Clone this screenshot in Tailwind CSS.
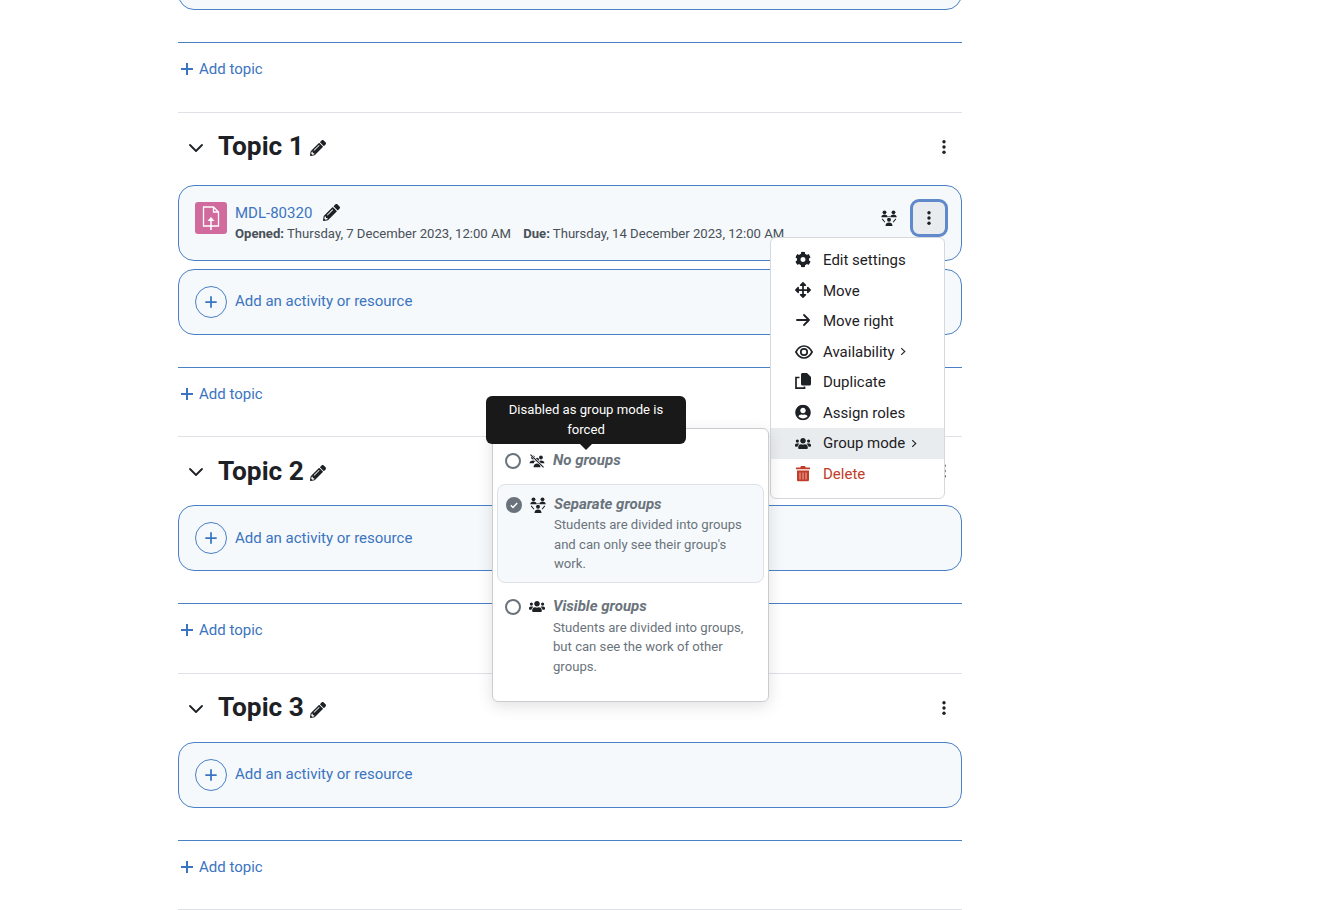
<!DOCTYPE html>
<html>
<head>
<meta charset="utf-8">
<script src="https://cdn.jsdelivr.net/npm/@tailwindcss/browser@4"></script>
</head>
<body class="bg-white">
<svg class="hidden" aria-hidden="true">
  <symbol id="pen" viewBox="0 0 512 512"><path fill="currentColor" d="M497.9 142.1l-46.1 46.1c-4.7 4.7-12.3 4.7-17 0l-111-111c-4.7-4.7-4.7-12.3 0-17l46.1-46.1c18.7-18.7 49.1-18.7 67.9 0l60.1 60.1c18.8 18.7 18.8 49.1 0 67.9zM284.2 99.8L21.6 362.4.4 483.9c-2.9 16.4 11.4 30.6 27.8 27.8l121.5-21.3 262.6-262.6c4.7-4.7 4.7-12.3 0-17l-111-111c-4.8-4.7-12.4-4.7-17.1 0zM124.1 339.9c-5.5-5.5-5.5-14.3 0-19.8l154-154c5.5-5.5 14.3-5.5 19.8 0s5.5 14.3 0 19.8l-154 154c-5.5 5.5-14.3 5.5-19.8 0zM88 424h48v36.3l-64.5 11.3-31.1-31.1L51.7 376H88v48z"/></symbol>
  <symbol id="chev" viewBox="0 0 16 16"><path fill="none" stroke="currentColor" stroke-width="1.800" stroke-linecap="round" stroke-linejoin="round" d="M2 5l6 6 6-6"/></symbol>
  <symbol id="kebab" viewBox="0 0 16 16"><circle cx="8" cy="2.800" r="1.700" fill="currentColor"/><circle cx="8" cy="8" r="1.700" fill="currentColor"/><circle cx="8" cy="13.200" r="1.700" fill="currentColor"/></symbol>
  <symbol id="plus" viewBox="0 0 16 16"><path fill="none" stroke="currentColor" stroke-width="2" d="M8 1.500v13M1.500 8h13"/></symbol>
  <symbol id="plusb" viewBox="0 0 12 12"><path fill="none" stroke="currentColor" stroke-width="2" d="M6 0v12M0 6h12"/></symbol>
  <symbol id="users" viewBox="0 0 640 512"><path fill="currentColor" d="M96 224c35.300 0 64-28.700 64-64s-28.700-64-64-64-64 28.700-64 64 28.700 64 64 64zm448 0c35.300 0 64-28.700 64-64s-28.700-64-64-64-64 28.700-64 64 28.700 64 64 64zm32 32h-64c-17.600 0-33.500 7.100-45.100 18.600 40.300 22.100 68.900 62 75.100 109.400h66c17.700 0 32-14.300 32-32v-32c0-35.300-28.700-64-64-64zm-256 0c61.900 0 112-50.100 112-112S381.900 32 320 32 208 82.100 208 144s50.100 112 112 112zm76.800 32h-8.300c-20.800 10-43.900 16-68.500 16s-47.600-6-68.500-16h-8.300C179.600 288 128 339.600 128 403.200V432c0 26.500 21.500 48 48 48h288c26.500 0 48-21.500 48-48v-28.800c0-63.600-51.600-115.200-115.200-115.200zm-223.700-13.400C161.500 263.100 145.600 256 128 256H64c-35.300 0-64 28.700-64 64v32c0 17.700 14.300 32 32 32h65.900c6.300-47.400 34.900-87.300 75.200-109.400z"/></symbol>
  <symbol id="sep" viewBox="0 0 16 16"><g fill="currentColor"><circle cx="3.500" cy="2.300" r="1.900"/><path d="M.3 7.300C.3 5.300 1.700 4.500 3.500 4.500s3.200.8 3.200 2.800z"/><circle cx="12.500" cy="2.300" r="1.900"/><path d="M9.300 7.300c0-2 1.400-2.800 3.200-2.800s3.200.8 3.200 2.800z"/><circle cx="8" cy="9.700" r="2"/><path d="M4.500 16c0-2.300 1.500-3.400 3.500-3.400s3.500 1.100 3.500 3.400z"/><path d="M1.600 8.600l2.700 3.300-.8.600L.8 9.200zM14.400 8.600l-2.700 3.300.8.600 2.700-3.300zM6 7h4L8 6.200z"/></g></symbol>
  <symbol id="nog" viewBox="0 0 18 16"><g fill="currentColor"><circle cx="4.500" cy="4" r="2.200"/><circle cx="13.500" cy="4" r="2.200"/><circle cx="9" cy="6.500" r="2.300"/><path d="M.5 10.500c0-2 1.700-3.200 4-3.200 1 0 1.800.2 2.400.6-.8.700-1.400 1.600-1.500 2.600z"/><path d="M17.500 10.500c0-2-1.700-3.200-4-3.200-1 0-1.800.2-2.400.6.800.7 1.400 1.600 1.500 2.600z"/><path d="M5 15c0-2.600 1.700-4.200 4-4.200s4 1.600 4 4.200z"/></g><path d="M1.500.5l15 14.500" stroke="white" stroke-width="2.400"/><path d="M1.500.8l15 14.500" stroke="currentColor" stroke-width="1.300"/></symbol>
</svg>

<div class="relative h-[910px] overflow-hidden text-[15px] leading-[22px] text-[#1d2125]" style="font-family:Roboto,'Liberation Sans',sans-serif">
  <div class="ml-[178px] w-[784px]">
    <div class="-mt-[56px] h-[66px] rounded-[16px] border border-[#4a80c6] bg-[#f5f9fc]"></div>
    <div class="mt-[32px] h-[70px] border-t border-[#4a80c6]">
      <a class="flex h-[51px] items-center gap-[6px] pl-[3px] text-[#3b74c0]"><svg class="size-[12px]"><use href="#plusb"/></svg><span class="-translate-y-[0.5px]">Add topic</span></a>
    </div>

    <!-- Topic 1 -->
    <section class="border-t border-[#dee2e6]">
      <div class="flex h-[72px] items-center pb-[6px]">
        <svg class="ml-[10px] size-[16px] translate-y-[2px]"><use href="#chev"/></svg>
        <h3 class="ml-[14px] text-[26.25px] font-bold leading-none">Topic 1</h3>
        <svg class="ml-[6px] mt-[4px] size-[16px]"><use href="#pen"/></svg>
        <svg class="ml-auto mr-[10px] size-[16px] translate-y-[1px]"><use href="#kebab"/></svg>
      </div>
      <div class="flex h-[76px] items-start rounded-[16px] border border-[#4a80c6] bg-[#f5f9fc] pl-[16px] pr-[13px]">
        <div class="mt-[16px] flex size-[32px] items-center justify-center rounded-[3px] bg-[#d16b9d] text-white">
          <svg width="18" height="26" viewBox="0 0 18 26" fill="none" stroke="white" stroke-width="1.300"><path d="M1.500 2h10l5 5v14h-15zM11.500 2v5h5"/><path d="M9 25v-10" stroke-width="1.500"/><path d="M5.500 16L9 12l3.500 4z" fill="white" stroke="none"/></svg>
        </div>
        <div class="ml-[8px] mt-[16px] min-w-0">
          <div class="flex h-[22px] items-center text-[#3b74c0]">MDL-80320<svg class="ml-[11px] size-[17px] -translate-y-[1px] text-[#1d2125]"><use href="#pen"/></svg></div>
          <div class="whitespace-nowrap text-[13.125px] leading-[20px] text-[#495057]"><b class="font-bold">Opened:</b> Thursday, 7 December 2023, 12:00 AM <b class="ml-[9px] font-bold">Due:</b> Thursday, 14 December 2023, 12:00 AM</div>
        </div>
        <svg class="ml-auto mt-[24px] h-[16px] w-[16px]"><use href="#sep"/></svg>
        <div class="ml-[13px] mt-[13px] flex h-[38px] w-[38px] items-center justify-center rounded-[9px] border-[3px] border-[#6089cb] bg-[#e9ecef]"><svg class="size-[16px]"><use href="#kebab"/></svg></div>
      </div>
      <div class="mt-[8px] flex h-[66px] items-center gap-[8px] rounded-[16px] border border-[#4a80c6] bg-[#f5f9fc] pl-[16px] text-[#3b74c0]">
        <span class="flex size-[32px] items-center justify-center rounded-full border border-[#4a80c6]"><svg class="size-[14px]"><use href="#plus"/></svg></span><span class="-translate-y-[1px]">Add an activity or resource</span>
      </div>
      <div class="mt-[32px] h-[69px] border-t border-[#4a80c6]">
        <a class="flex h-[51px] items-center gap-[6px] pl-[3px] text-[#3b74c0]"><svg class="size-[12px]"><use href="#plusb"/></svg>Add topic</a>
      </div>
    </section>

    <!-- Topic 2 -->
    <section class="border-t border-[#dee2e6]">
      <div class="flex h-[68px] items-center">
        <svg class="ml-[10px] size-[16px] translate-y-[1px]"><use href="#chev"/></svg>
        <h3 class="ml-[14px] text-[26.25px] font-bold leading-none">Topic 2</h3>
        <svg class="ml-[6px] mt-[4px] size-[16px]"><use href="#pen"/></svg>
        <svg class="ml-auto mr-[10px] size-[16px]"><use href="#kebab"/></svg>
      </div>
      <div class="flex h-[66px] items-center gap-[8px] rounded-[16px] border border-[#4a80c6] bg-[#f5f9fc] pl-[16px] text-[#3b74c0]">
        <span class="flex size-[32px] items-center justify-center rounded-full border border-[#4a80c6]"><svg class="size-[14px]"><use href="#plus"/></svg></span>Add an activity or resource
      </div>
      <div class="mt-[32px] h-[70px] border-t border-[#4a80c6]">
        <a class="flex h-[51px] items-center gap-[6px] pl-[3px] text-[#3b74c0]"><svg class="size-[12px]"><use href="#plusb"/></svg>Add topic</a>
      </div>
    </section>

    <!-- Topic 3 -->
    <section class="border-t border-[#dee2e6]">
      <div class="flex h-[68px] items-center">
        <svg class="ml-[10px] size-[16px] translate-y-[1px]"><use href="#chev"/></svg>
        <h3 class="ml-[14px] -translate-y-[1px] text-[26.25px] font-bold leading-none">Topic 3</h3>
        <svg class="ml-[6px] mt-[4px] size-[16px]"><use href="#pen"/></svg>
        <svg class="ml-auto mr-[10px] size-[16px]"><use href="#kebab"/></svg>
      </div>
      <div class="flex h-[66px] items-center gap-[8px] rounded-[16px] border border-[#4a80c6] bg-[#f5f9fc] pl-[16px] text-[#3b74c0]">
        <span class="flex size-[32px] items-center justify-center rounded-full border border-[#4a80c6]"><svg class="size-[14px]"><use href="#plus"/></svg></span><span class="-translate-y-[1px]">Add an activity or resource</span>
      </div>
      <div class="mt-[32px] h-[69px] border-t border-[#4a80c6]">
        <a class="flex h-[51px] items-center gap-[6px] pl-[3px] text-[#3b74c0]"><svg class="size-[12px]"><use href="#plusb"/></svg>Add topic</a>
      </div>
    </section>
    <div class="border-t border-[#dee2e6]"></div>
  </div>

  <!-- Action menu -->
  <div class="absolute left-[770px] top-[236.8px] w-[175px] rounded-[6px] border border-[#d5d8dc] bg-white pb-[8px] pt-[7px]">
    <div class="flex h-[30.6px] items-center"><svg class="ml-[24px] size-[16px] -translate-y-[0.5px]" viewBox="0 0 512 512"><path fill="currentColor" d="M487.4 315.700l-42.600-24.600c4.300-23.200 4.300-47 0-70.200l42.600-24.600c4.900-2.800 7.100-8.600 5.500-14-11.100-35.600-30-67.800-54.700-94.600-3.800-4.100-10-5.100-14.800-2.300L380.800 110c-17.900-15.400-38.500-27.300-60.800-35.100V25.800c0-5.600-3.900-10.500-9.400-11.700-36.700-8.200-74.300-7.800-109.200 0-5.500 1.200-9.400 6.100-9.400 11.700V75c-22.200 7.900-42.800 19.800-60.800 35.100L88.700 85.500c-4.900-2.800-11-1.900-14.800 2.300-24.700 26.700-43.600 58.900-54.700 94.600-1.700 5.400.6 11.200 5.500 14L67.300 221c-4.300 23.200-4.300 47 0 70.200l-42.600 24.600c-4.900 2.800-7.100 8.600-5.500 14 11.100 35.600 30 67.800 54.700 94.600 3.800 4.100 10 5.100 14.800 2.300l42.600-24.600c17.900 15.400 38.500 27.300 60.800 35.100v49.200c0 5.600 3.900 10.500 9.400 11.700 36.700 8.200 74.300 7.800 109.200 0 5.500-1.200 9.400-6.100 9.400-11.700v-49.200c22.200-7.900 42.800-19.800 60.800-35.100l42.600 24.600c4.900 2.800 11 1.900 14.800-2.300 24.700-26.700 43.600-58.900 54.700-94.600 1.500-5.500-.7-11.300-5.600-14.100zM256 336c-44.100 0-80-35.900-80-80s35.900-80 80-80 80 35.900 80 80-35.900 80-80 80z"/></svg><span class="ml-[12px]">Edit settings</span></div>
    <div class="flex h-[30.6px] items-center"><svg class="ml-[24px] size-[16px] -translate-y-[1px]" viewBox="0 0 512 512"><path fill="currentColor" d="M352.201 425.775l-79.196 79.196c-9.373 9.373-24.568 9.373-33.941 0l-79.196-79.196c-15.119-15.119-4.411-40.971 16.971-40.970h51.162L228 284H127.196v51.162c0 21.382-25.851 32.090-40.971 16.971L7.029 272.937c-9.373-9.373-9.373-24.569 0-33.941L86.225 159.800c15.119-15.119 40.971-4.411 40.971 16.971V228H228V127.196h-51.230c-21.382 0-32.090-25.851-16.971-40.971l79.196-79.196c9.373-9.373 24.568-9.373 33.941 0l79.196 79.196c15.119 15.119 4.411 40.971-16.971 40.971h-51.162V228h100.804v-51.162c0-21.382 25.851-32.090 40.970-16.971l79.196 79.196c9.373 9.373 9.373 24.569 0 33.941L425.773 352.200c-15.119 15.119-40.971 4.411-40.970-16.971V284H284v100.804h51.230c21.382 0 32.090 25.851 16.971 40.971z"/></svg><span class="ml-[12px]">Move</span></div>
    <div class="flex h-[30.6px] items-center"><svg class="ml-[24px] size-[16px] -translate-y-[1px]" viewBox="0 0 16 16" fill="none" stroke="currentColor" stroke-width="1.800" stroke-linecap="round" stroke-linejoin="round"><path d="M2 8h12M9 3l5 5-5 5"/></svg><span class="ml-[12px]">Move right</span></div>
    <div class="flex h-[30.6px] items-center"><svg class="ml-[24px] h-[14px] w-[18px]" viewBox="0 0 18 14" fill="none" stroke="currentColor" stroke-width="1.700"><path d="M.9 7C2.800 3.400 5.700 1 9 1s6.200 2.400 8.100 6c-1.900 3.600-4.800 6-8.100 6S2.800 10.600.9 7z"/><circle cx="9" cy="7" r="3.200"/></svg><span class="ml-[10px]">Availability</span><svg class="ml-[4px] size-[8px] -translate-y-[0.5px]" viewBox="0 0 8 8" fill="none" stroke="currentColor" stroke-width="1.100"><path d="M2.200.6L5.800 4 2.200 7.400"/></svg></div>
    <div class="flex h-[30.6px] items-center"><svg class="ml-[24px] size-[16px] -translate-y-[1px]" viewBox="0 0 16 16"><path fill="currentColor" d="M6 1.500C6 .7 6.700 0 7.500 0H12l4 4v7c0 .8-.7 1.500-1.500 1.500h-7C6.700 12.500 6 11.800 6 11z"/><path fill="none" stroke="currentColor" stroke-width="1.700" d="M4.500 4.500H1v10.700h8.500V13.500"/></svg><span class="ml-[12px]">Duplicate</span></div>
    <div class="flex h-[30.6px] items-center"><svg class="ml-[24px] size-[16px] -translate-y-[0.5px]" viewBox="0 0 496 512"><path fill="currentColor" d="M248 8C111 8 0 119 0 256s111 248 248 248 248-111 248-248S385 8 248 8zm0 96c48.600 0 88 39.400 88 88s-39.400 88-88 88-88-39.400-88-88 39.400-88 88-88zm0 344c-58.700 0-111.300-26.600-146.500-68.200 18.800-35.400 55.600-59.800 98.500-59.800 2.400 0 4.800.4 7.100 1.100 13 4.200 26.600 6.900 40.900 6.900 14.300 0 28-2.700 40.900-6.900 2.300-.7 4.700-1.100 7.100-1.100 42.900 0 79.700 24.400 98.500 59.800C359.300 421.400 306.700 448 248 448z"/></svg><span class="ml-[12px]">Assign roles</span></div>
    <div class="flex h-[30.6px] items-center bg-[#e9ecef]"><svg class="ml-[24px] h-[13px] w-[16px]"><use href="#users"/></svg><span class="ml-[12px] -translate-y-[1px]">Group mode</span><svg class="ml-[5px] size-[8px] -translate-y-[0.5px]" viewBox="0 0 8 8" fill="none" stroke="currentColor" stroke-width="1.100"><path d="M2.200.6L5.800 4 2.200 7.400"/></svg></div>
    <div class="flex h-[30.6px] items-center text-[#c13c29]"><svg class="ml-[25px] h-[16px] w-[14px] -translate-y-[0.5px]" viewBox="0 0 14 16"><path fill="currentColor" d="M1 5h12v9.500c0 .8-.7 1.500-1.500 1.500h-9C1.700 16 1 15.300 1 14.500zM0 2h4.300l.7-1.500h4L9.700 2H14v1.800H0z"/><path stroke="#f1b5ab" stroke-width="1" d="M4 7v7M7 7v7M10 7v7"/></svg><span class="ml-[13px]">Delete</span></div>
  </div>

  <!-- Group mode popover -->
  <div class="absolute left-[492px] top-[428px] h-[274px] w-[277px] rounded-[6px] border border-[#c9ccd0] bg-white px-[4px] shadow-[0_4px_16px_rgba(0,0,0,0.12)]">
    <div class="flex h-[55px] pl-[8px] pt-[24px]">
      <span class="size-[16px] rounded-full border-2 border-[#6a737b]"></span>
      <svg class="ml-[8px] mt-[1px] h-[14px] w-[16px]"><use href="#nog"/></svg>
      <span class="ml-[8px] -mt-[1px] text-[15px] font-bold italic leading-[16px] text-[#6a737b]">No groups</span>
    </div>
    <div class="flex h-[99px] rounded-[8px] border border-[#dee2e6] bg-[#f5f9fc] pl-[8px] pt-[11px]">
      <svg class="mt-[1px] size-[16px] shrink-0" viewBox="0 0 16 16"><circle cx="8" cy="8" r="8" fill="#6a737b"/><path d="M4.800 8.300l2.200 2.200 4.200-4.400" fill="none" stroke="white" stroke-width="1.500"/></svg>
      <svg class="ml-[8px] mt-[1px] size-[16px] shrink-0"><use href="#sep"/></svg>
      <div class="ml-[8px] text-[13.125px] leading-[19.500px] text-[#6a737b]">
        <div class="text-[15px] font-bold italic leading-[16px]">Separate groups</div>
        <div class="mt-[3px] w-[200px]">Students are divided into groups and can only see their group's work.</div>
      </div>
    </div>
    <div class="flex pl-[8px] pt-[15px]">
      <span class="mt-[1px] size-[16px] shrink-0 rounded-full border-2 border-[#6a737b]"></span>
      <svg class="ml-[8px] mt-[2px] h-[13px] w-[16px] shrink-0"><use href="#users"/></svg>
      <div class="ml-[8px] text-[13.125px] leading-[19.500px] text-[#6a737b]">
        <div class="text-[15px] font-bold italic leading-[16px]">Visible groups</div>
        <div class="mt-[3.6px] w-[200px]">Students are divided into groups, but can see the work of other groups.</div>
      </div>
    </div>
  </div>

  <!-- Tooltip -->
  <div class="absolute left-[486px] top-[396px] h-[48px] w-[200px] rounded-[6px] bg-[#191919] px-[8px] pt-[4px] text-center text-[13.125px] leading-[19.500px] text-white">Disabled as group mode is forced
    <span class="absolute left-[94px] top-[48px] h-0 w-0 border-x-[6px] border-t-[6px] border-x-transparent border-t-[#191919]"></span>
  </div>
</div>
</body>
</html>
